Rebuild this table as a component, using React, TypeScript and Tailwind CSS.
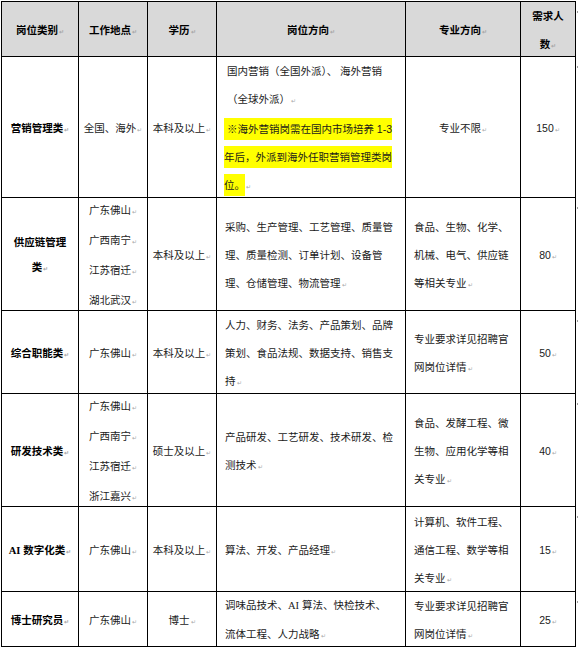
import React from 'react';

type Line = string | React.ReactNode;

const Mark: React.FC = () => <span className="ml-px text-[6px] text-[#a8a8a8]">↵</span>;

const RowEnd: React.FC = () => (
  <span className="absolute -right-[3px] top-[9px] h-[2px] w-px bg-[#9a9a9a]"></span>
);

const Cell: React.FC<{
  lines: Line[];
  left?: boolean;
  head?: boolean;
  bold?: boolean;
  end?: boolean;
  everyLine?: boolean;
  leading?: string;
}> = ({ lines, left, head, bold, end, everyLine, leading = 'leading-[28px]' }) => (
  <div
    className={`relative flex flex-col justify-center pt-[3px] ${head ? 'bg-[#d9d9d9]' : 'bg-white'} ${
      left ? 'items-start pl-[8px]' : 'items-center text-center'
    } ${head || bold ? 'font-bold text-black' : 'text-[#1a1a1a]'}`}
  >
    {lines.map((l, i) => (
      <div key={i} className={`whitespace-nowrap ${leading}`}>
        {l}
        {(everyLine || i === lines.length - 1) && <Mark />}
      </div>
    ))}
    {end && <RowEnd />}
  </div>
);

const Hl: React.FC<{ children: React.ReactNode }> = ({ children }) => (
  <span className="inline-block bg-[#ffff00] leading-[22px]">{children}</span>
);

const cities = ['广东佛山', '广西南宁', '江苏宿迁'];

export default function App() {
  return (
    <div className="min-h-screen bg-white pt-px pl-px">
      <div
        className="grid w-[575px] grid-cols-[76px_68px_68px_188px_114px_54px] grid-rows-[54px_140px_112px_82px_112px_84px_54px] gap-px border border-black bg-black text-[10.5px]"
        style={{ fontFamily: '"Liberation Sans", "Noto Sans CJK SC", sans-serif' }}
      >
        {/* header */}
        <Cell head lines={['岗位类别']} />
        <Cell head lines={['工作地点']} />
        <Cell head lines={['学历']} />
        <Cell head lines={['岗位方向']} />
        <Cell head lines={['专业方向']} />
        <Cell head end lines={['需求人', '数']} />

        {/* 营销管理类 */}
        <Cell bold lines={['营销管理类']} />
        <Cell lines={['全国、海外']} />
        <Cell lines={['本科及以上']} />
        <div className="relative flex flex-col items-start justify-center bg-white pl-[7px] pt-[3px] text-[#1a1a1a]">
          <div className="whitespace-nowrap leading-[28px]">&nbsp;国内营销（全国外派）、 海外营销</div>
          <div className="whitespace-nowrap leading-[28px]">
            &nbsp;（全球外派）
            <Mark />
          </div>
          <div className="whitespace-nowrap leading-[28px]">
            <Hl>&nbsp;※海外营销岗需在国内市场培养 1-3</Hl>
          </div>
          <div className="whitespace-nowrap leading-[28px]">
            <Hl>年后，外派到海外任职营销管理类岗</Hl>
          </div>
          <div className="whitespace-nowrap leading-[28px]">
            <Hl>位。</Hl>
            <Mark />
          </div>
        </div>
        <Cell lines={['专业不限']} />
        <Cell end lines={['150']} />

        {/* 供应链管理类 */}
        <Cell bold leading="leading-[25px]" lines={['供应链管理', '类']} />
        <Cell everyLine lines={[...cities, '湖北武汉']} />
        <Cell lines={['本科及以上']} />
        <Cell
          left
          lines={['采购、生产管理、工艺管理、质量管', '理、质量检测、订单计划、设备管', '理、仓储管理、物流管理']}
        />
        <Cell left lines={['食品、生物、化学、', '机械、电气、供应链', '等相关专业']} />
        <Cell end lines={['80']} />

        {/* 综合职能类 */}
        <Cell bold lines={['综合职能类']} />
        <Cell lines={['广东佛山']} />
        <Cell lines={['本科及以上']} />
        <Cell left lines={['人力、财务、法务、产品策划、品牌', '策划、食品法规、数据支持、销售支', '持']} />
        <Cell left lines={['专业要求详见招聘官', '网岗位详情']} />
        <Cell end lines={['50']} />

        {/* 研发技术类 */}
        <Cell bold lines={['研发技术类']} />
        <Cell everyLine lines={[...cities, '浙江嘉兴']} />
        <Cell lines={['硕士及以上']} />
        <Cell left lines={['产品研发、工艺研发、技术研发、检', '测技术']} />
        <Cell left lines={['食品、发酵工程、微', '生物、应用化学等相', '关专业']} />
        <Cell end lines={['40']} />

        {/* AI 数字化类 */}
        <Cell
          bold
          lines={[
            <>
              <span style={{ fontFamily: '"Liberation Serif", serif' }}>AI</span> 数字化类
            </>,
          ]}
        />
        <Cell lines={['广东佛山']} />
        <Cell lines={['本科及以上']} />
        <Cell left lines={['算法、开发、产品经理']} />
        <Cell left lines={['计算机、软件工程、', '通信工程、数学等相', '关专业']} />
        <Cell end lines={['15']} />

        {/* 博士研究员 */}
        <Cell bold lines={['博士研究员']} />
        <Cell lines={['广东佛山']} />
        <Cell lines={['博士']} />
        <Cell
          left
          lines={[
            <>
              调味品技术、<span style={{ fontFamily: '"Liberation Serif", serif' }}>AI</span> 算法、快检技术、
            </>,
            '流体工程、人力战略',
          ]}
        />
        <Cell left lines={['专业要求详见招聘官', '网岗位详情']} />
        <Cell end lines={['25']} />
      </div>
    </div>
  );
}
